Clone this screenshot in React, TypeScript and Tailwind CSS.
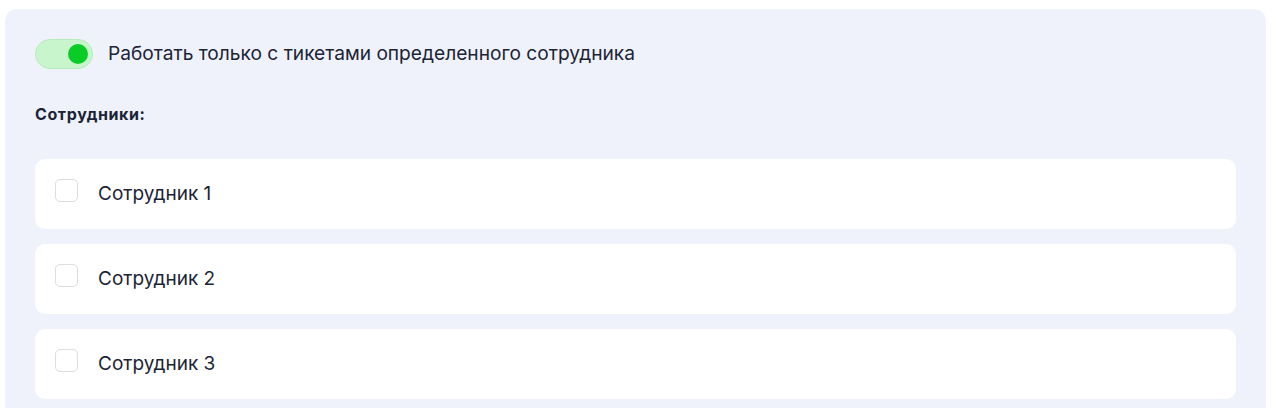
import { useState } from 'react';

const employees = ['Сотрудник 1', 'Сотрудник 2', 'Сотрудник 3'];

export default function App() {
    const [onlyOwn, setOnlyOwn] = useState(true);
    const [checked, setChecked] = useState<boolean[]>([false, false, false]);

    return (
        <div className="min-h-screen bg-white pt-[9px] pl-[5px] pr-[18px] font-['Inter',sans-serif]">
            <div className="bg-[#eff2fa] rounded-t-xl px-[30px] pt-[30px] pb-8">
                {/* Переключатель */}
                <div className="flex items-center gap-[15px]">
                    <button
                        onClick={() => setOnlyOwn(!onlyOwn)}
                        className="w-[58px] h-[30px] rounded-full bg-[#c9f5cd] border border-[#b4edbb] flex items-center px-[4px] justify-end"
                    >
                        <span className="w-[20px] h-[20px] rounded-full bg-[#0bcb27] block" />
                    </button>
                    <span className="text-[19.15px] text-[#1b2436] leading-none">
                        Работать только с тикетами определенного сотрудника
                    </span>
                </div>

                <div className="mt-[33px] text-[16px] tracking-[0.6px] leading-[24px] font-bold text-[#1b2436]">Сотрудники:</div>

                {/* Список сотрудников */}
                <div className="mt-[33px] flex flex-col gap-[15px]">
                    {employees.map((name, i) => (
                        <label
                            key={name}
                            className="h-[70px] bg-white rounded-[10px] flex items-center pl-[20px] gap-[20px] cursor-pointer"
                        >
                            <input
                                type="checkbox"
                                className="hidden"
                                checked={checked[i]}
                                onChange={() => setChecked(checked.map((c, j) => (j === i ? !c : c)))}
                            />
                            <span className="w-[23px] h-[23px] rounded-[5px] border border-[#dcdde0] bg-white block -translate-y-[4px]" />
                            <span className="text-[19px] text-[#1b2436]">{name}</span>
                        </label>
                    ))}
                </div>
            </div>
        </div>
    );
}
